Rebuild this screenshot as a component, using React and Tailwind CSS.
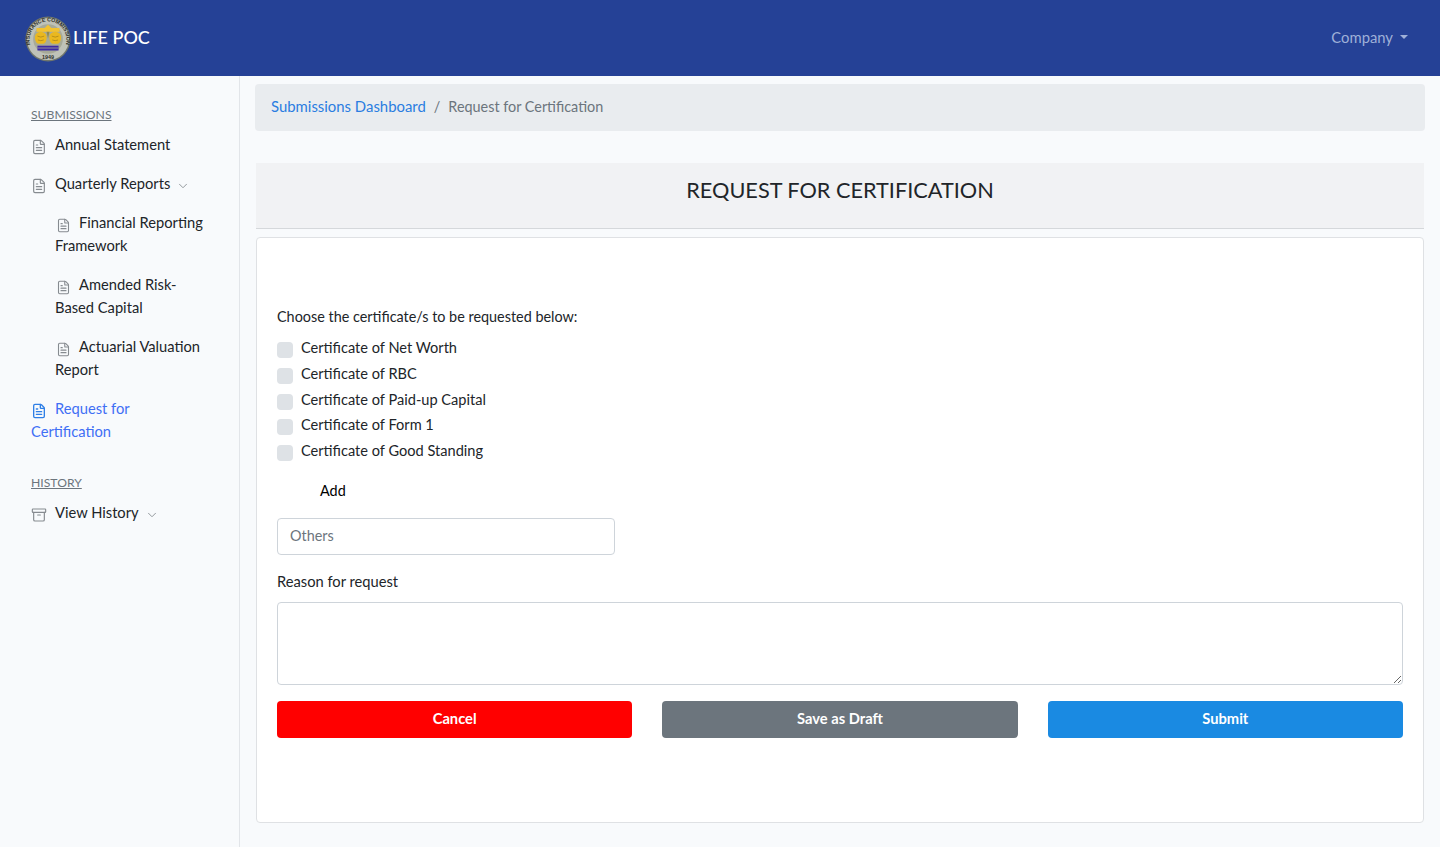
import React from 'react';
import { FileText, Archive, ChevronDown } from 'lucide-react';

const certificates = [
    'Certificate of Net Worth',
    'Certificate of RBC',
    'Certificate of Paid-up Capital',
    'Certificate of Form 1',
    'Certificate of Good Standing',
];

const Seal = () => (
    <svg width="46" height="46" viewBox="0 0 48 48" className="shrink-0 mt-[3px] mr-[2px]">
        <defs>
            <path id="sealTop" d="M5.5 30 A19.2 19.2 0 1 1 42.5 30" />
        </defs>
        <circle cx="24" cy="24" r="23.5" fill="#70766c" />
        <circle cx="24" cy="24" r="22" fill="#bfc2b8" />
        <circle cx="24" cy="24" r="15.5" fill="#a7aa98" />
        <text fontSize="5.6" fontWeight="700" fill="#2c2e29" fontFamily="'Liberation Sans', sans-serif">
            <textPath href="#sealTop" textLength="70" lengthAdjust="spacing">INSURANCE COMMISSION</textPath>
        </text>
        <text x="24" y="45" fontSize="5.6" fontWeight="700" textAnchor="middle" fill="#2c2e29" fontFamily="'Liberation Sans', sans-serif">1949</text>
        <path d="M24 9 l3.5 3.5 h-7 z" fill="#f2c230" />
        <rect x="12" y="12.5" width="24" height="4" fill="#f2c230" />
        <path d="M10.5 21 q1-4 6-4.5 q5 .5 6 4.5 q.5 6-3 8 h-6 q-3.5-2-3-8z" fill="#eab81f" />
        <path d="M25.5 21 q1-4 6-4.5 q5 .5 6 4.5 q.5 6-3 8 h-6 q-3.5-2-3-8z" fill="#eab81f" />
        <path d="M13 21 q3.5 2 7 0 M13.5 25 q3 1.5 6 0 M28 21 q3.5 2 7 0 M28.5 25 q3 1.5 6 0" fill="none" stroke="#a8841a" strokeWidth="0.8" />
        <path d="M22.5 16.5 h3 l-1.5 7 z" fill="#8f8a4f" />
        <rect x="13" y="31" width="22" height="5" fill="#3d2aa5" />
        <rect x="13" y="33" width="22" height="0.8" fill="#a7aa98" />
    </svg>
);

const NavItem = ({ indent, active, icon: Icon = FileText, caret, children }) => (
    <a
        href="#"
        className={`block py-2 pr-[32px] text-[14.7px] leading-[23px] ${active ? 'text-[#3f6ff5]' : 'text-[#212529]'} ${indent ? 'pl-[55px]' : 'pl-[31px]'}`}
    >
        <Icon
            size={indent ? 15 : 16}
            strokeWidth={active ? 2 : 1.75}
            className={`inline-block align-[-5px] mr-2 ${indent ? 'ml-[1px]' : ''} ${active ? 'text-[#2f7fe6]' : 'text-[#868b90]'}`}
        />
        {children}
        {caret && <ChevronDown size={14} strokeWidth={1.5} className="inline-block align-[-4px] ml-1.5 text-[#868b90]" />}
    </a>
);

const Heading = ({ children }) => (
    <div className="pl-[31px] mb-px text-[12.2px] leading-[19px] underline text-[#6c757d]">{children}</div>
);

const App = () => {
    return (
        <div className="min-h-screen flex flex-col bg-[#f8fafc] text-[#212529] text-[14.4px] leading-[23px] [font-family:Lato,sans-serif]">
            <nav className="h-[76px] shrink-0 bg-[#254196] flex items-center justify-between pl-[25px] pr-[32px] pb-[2px]">
                <a href="#" className="flex items-center text-white text-[18px] font-medium">
                    <Seal />
                    <span>LIFE POC</span>
                </a>
                <a href="#" className="flex items-center text-[14.8px] text-[#9fb0d8]">
                    Company
                    <span className="ml-[7px] w-0 h-0 border-x-[4.5px] border-x-transparent border-t-[4.5px] border-t-[#9fb0d8]" />
                </a>
            </nav>

            <div className="flex-1 flex">
                <aside className="w-[240px] shrink-0 border-r border-[#e2e5e9] pt-[29px]">
                    <Heading>SUBMISSIONS</Heading>
                    <NavItem>Annual Statement</NavItem>
                    <NavItem caret>Quarterly Reports</NavItem>
                    <NavItem indent>Financial Reporting Framework</NavItem>
                    <NavItem indent>Amended Risk-Based Capital</NavItem>
                    <NavItem indent>Actuarial Valuation Report</NavItem>
                    <NavItem active>Request for Certification</NavItem>
                    <div className="h-[22px]" />
                    <Heading>HISTORY</Heading>
                    <NavItem icon={Archive} caret>View History</NavItem>
                </aside>

                <main className="flex-1 min-w-0 pl-[15px] pr-[15px] pt-2 pb-6">
                    <div className="h-[47px] flex items-center px-4 rounded bg-[#e9ecef] pb-[3px]">
                        <a href="#" className="text-[14.9px] text-[#2a7de1]">Submissions Dashboard</a>
                        <span className="px-2 text-[#6c757d]">/</span>
                        <span className="text-[#6c757d]">Request for Certification</span>
                    </div>

                    <div className="mx-px mt-8">
                        <div className="h-[66px] flex items-center justify-center bg-[#f1f2f4] border-b border-[#d5d8db] pb-[11px] text-[21.7px] text-[#212529]">
                            REQUEST FOR CERTIFICATION
                        </div>

                        <div className="mt-2 h-[586px] bg-white border border-[#dfe1e4] rounded px-5 pt-[67px]">
                            <p>Choose the certificate/s to be requested below:</p>
                            <div className="mt-[8px] flex flex-col gap-[2.8px]">
                                {certificates.map(c => (
                                    <label key={c} className="flex items-center gap-2 h-[23px] text-[14.6px]">
                                        <span className="w-4 h-4 mt-[5px] rounded bg-[#dee2e6]" />
                                        {c}
                                    </label>
                                ))}
                            </div>
                            <div className="mt-[17px] pl-[43px] text-black">Add</div>
                            <input
                                placeholder="Others"
                                className="mt-[16px] block w-[338px] h-[37px] px-3 pb-[2px] bg-white border border-[#ced4da] rounded placeholder:text-[#6c757d] outline-none"
                            />
                            <div className="mt-[15px] text-[14.7px]">Reason for request</div>
                            <textarea className="mt-[9px] block w-full h-[83px] border border-[#ced4da] rounded outline-none" />
                            <div className="mt-4 grid grid-cols-3 gap-[30px]">
                                <button className="h-[37px] pb-[2px] rounded bg-[#ff0000] text-[14.7px] text-white font-bold">Cancel</button>
                                <button className="h-[37px] pb-[2px] rounded bg-[#6c757d] text-[14.7px] text-white font-bold">Save as Draft</button>
                                <button className="h-[37px] pb-[2px] rounded bg-[#1a8ae2] text-[14.7px] text-white font-bold">Submit</button>
                            </div>
                        </div>
                    </div>
                </main>
            </div>
        </div>
    );
};

export default App;
